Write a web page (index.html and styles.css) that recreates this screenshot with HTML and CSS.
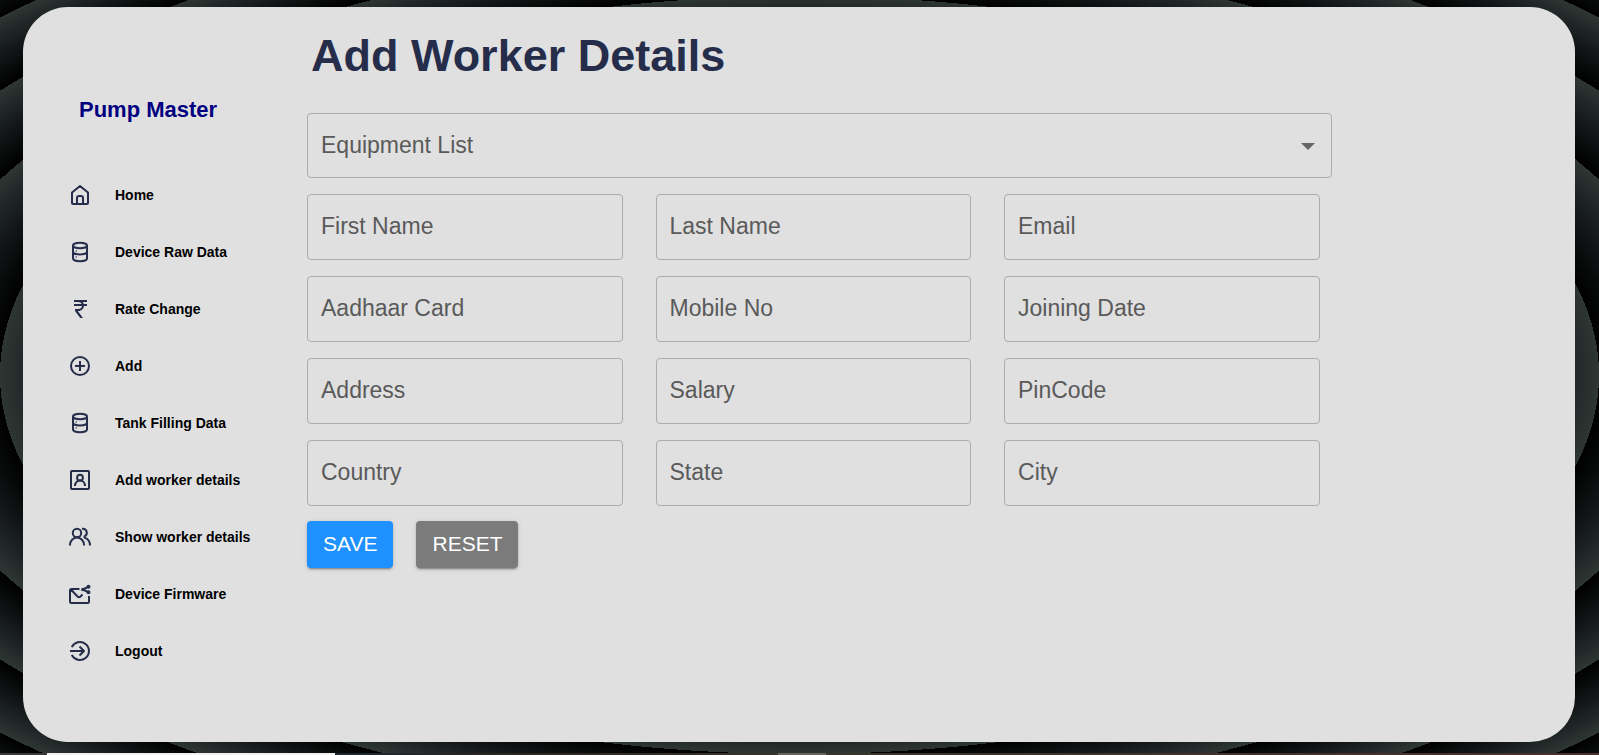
FILE: index.html
```html
<!DOCTYPE html>
<html lang="en">
<head>
<meta charset="utf-8">
<title>Pump Master - Add Worker Details</title>
<link rel="stylesheet" href="styles.css">
</head>
<body>
<div class="card">
  <aside class="sidebar">
    <h2 class="brand">Pump Master</h2>
    <nav>
      <ul class="menu">
        <li><a class="menu-link" href="#">
          <svg class="icon" viewBox="0 0 24 24"><path d="M5 21H19Q20 21 20 20V9.500L12 3L4 9.500V20Q4 21 5 21ZM9 21V15a2 2 0 0 1 2-2h2a2 2 0 0 1 2 2v6"/></svg>
          Home</a></li>
        <li><a class="menu-link" href="#">
          <svg class="icon" viewBox="0 0 24 24"><ellipse cx="12" cy="5.500" rx="7" ry="2.700"/><path d="M5 5.500v13c0 1.500 3 2.700 7 2.700s7-1.200 7-2.700v-13M5 11.700c0 1.500 3 2.700 7 2.700s7-1.200 7-2.700"/><path class="thin" d="M7.500 11h1.500M7.500 17h1.500"/></svg>
          Device Raw Data</a></li>
        <li><a class="menu-link" href="#">
          <svg class="icon icon-solid" viewBox="0 0 24 24"><path d="M13.660 7c-.56-1.180-1.760-2-3.160-2H6V3h13v2h-4.260c.48.580.840 1.260 1.050 2H19v2h-3.020c-.25 2.800-2.610 5-5.480 5h-.73l5.230 7h-2.770L7 14v-2h3.500c1.760 0 3.220-1.300 3.460-3H6V7z"/></svg>
          Rate Change</a></li>
        <li><a class="menu-link" href="#">
          <svg class="icon" viewBox="0 0 24 24"><circle cx="12" cy="12" r="9"/><path d="M12 7v10M7 12h10"/></svg>
          Add</a></li>
        <li><a class="menu-link" href="#">
          <svg class="icon" viewBox="0 0 24 24"><ellipse cx="12" cy="5.500" rx="7" ry="2.700"/><path d="M5 5.500v13c0 1.500 3 2.700 7 2.700s7-1.200 7-2.700v-13M5 11.700c0 1.500 3 2.700 7 2.700s7-1.200 7-2.700"/><path class="thin" d="M7.500 11h1.500M7.500 17h1.500"/></svg>
          Tank Filling Data</a></li>
        <li><a class="menu-link" href="#">
          <svg class="icon" viewBox="0 0 24 24"><rect x="3" y="3" width="18" height="18" rx="1"/><circle cx="12" cy="9.700" r="2.900"/><path d="M7 18c0-3.200 2-5.400 5-5.400s5 2.200 5 5.400"/></svg>
          Add worker details</a></li>
        <li><a class="menu-link" href="#">
          <svg class="icon" viewBox="0 0 24 24"><circle cx="9" cy="8" r="4.200"/><path d="M2 20.500V20a7 7.500 0 0 1 14 0v.5M14 3.800h.5a4 4 0 0 1 2 7.600v1.200c3.500 1.200 5.500 3.900 5.500 7.900"/></svg>
          Show worker details</a></li>
        <li><a class="menu-link" href="#">
          <svg class="icon" viewBox="0 0 24 24"><path d="M11.500 7H3.500Q2 7 2 8.500V19.500Q2 21 3.500 21H19.500Q21 21 21 19.500V14M3 7.500L9.500 14.500Q11 16 12.500 14.500L14.500 12.500"/><path d="M20.500 4.700L15 7.500L20.500 10.300"/><circle class="dot" cx="20.500" cy="4.700" r="1"/><circle class="dot" cx="20.500" cy="10.300" r="1"/><circle class="dot" cx="14.800" cy="7.500" r=".7"/></svg>
          Device Firmware</a></li>
        <li><a class="menu-link" href="#">
          <svg class="icon" viewBox="0 0 24 24"><path d="M3.800 8.200a9 9 0 1 1 0 7.600M2 12h13.500M11.500 7.500L16 12l-4.500 4.500"/></svg>
          Logout</a></li>
      </ul>
    </nav>
  </aside>
  <main class="content">
    <h1 class="title">Add Worker Details</h1>
    <form class="form">
      <div class="select-wrap">
        <select class="field field-select" aria-label="Equipment List">
          <option>Equipment List</option>
        </select>
        <svg class="caret" viewBox="0 0 14 7"><path d="M0 0h14L7 7z"/></svg>
      </div>
      <div class="grid">
        <input class="field" type="text" placeholder="First Name" aria-label="First Name">
        <input class="field" type="text" placeholder="Last Name" aria-label="Last Name">
        <input class="field" type="text" placeholder="Email" aria-label="Email">
        <input class="field" type="text" placeholder="Aadhaar Card" aria-label="Aadhaar Card">
        <input class="field" type="text" placeholder="Mobile No" aria-label="Mobile No">
        <input class="field" type="text" placeholder="Joining Date" aria-label="Joining Date">
        <input class="field" type="text" placeholder="Address" aria-label="Address">
        <input class="field" type="text" placeholder="Salary" aria-label="Salary">
        <input class="field" type="text" placeholder="PinCode" aria-label="PinCode">
        <input class="field" type="text" placeholder="Country" aria-label="Country">
        <input class="field" type="text" placeholder="State" aria-label="State">
        <input class="field" type="text" placeholder="City" aria-label="City">
      </div>
      <div class="actions">
        <button class="btn btn-save" type="button">SAVE</button>
        <button class="btn btn-reset" type="reset">RESET</button>
      </div>
    </form>
  </main>
</div>
<div class="bottom-strip"></div>
</body>
</html>
```

FILE: styles.css
```css
* {
  box-sizing: border-box;
}

body {
  margin: 0;
  min-height: 100vh;
  display: flex;
  flex-direction: column;
  font-family: "Liberation Sans", Arial, sans-serif;
  background: repeating-radial-gradient(50% 379px at 50% 375px, #000 0%, #141819 6%, #2e3634 12.5%);
}

.card {
  flex: 1;
  display: flex;
  margin: 7px 24px 11px 23px;
  border-radius: 45px;
  background: #e0e0e0;
}

.sidebar {
  flex: 0 0 284px;
  padding: 90px 0 0 44px;
}

.brand {
  margin: 0 0 43px 12px;
  font-size: 22px;
  line-height: 26px;
  color: #000080;
}

.menu {
  margin: 0;
  padding: 0;
  list-style: none;
}

.menu-link {
  display: flex;
  align-items: center;
  gap: 23px;
  height: 57px;
  padding-left: 1px;
  font-size: 14px;
  font-weight: bold;
  color: #000;
  text-decoration: none;
}

.icon {
  width: 24px;
  height: 24px;
  fill: none;
  stroke: #252d4a;
  stroke-width: 2;
  stroke-linejoin: round;
}

.icon .thin {
  stroke-width: 1;
}

.icon .dot,
.icon-solid {
  fill: #252d4a;
}

.icon-solid {
  stroke: none;
}

.content {
  flex: 1;
  padding-top: 23px;
}

.title {
  margin: 0 0 31px 4px;
  font-size: 45px;
  line-height: 52px;
  color: #252d4a;
}

.form {
  width: 80.8%;
}

.select-wrap {
  position: relative;
  display: flex;
}

.field {
  width: 100%;
  min-width: 0;
  height: 66px;
  padding: 18px 13px 20px;
  border: 1px solid #acacac;
  border-radius: 4px;
  background: transparent;
  font-family: inherit;
  font-size: 23px;
  line-height: 26px;
  color: #5a5a5a;
}

.field::placeholder {
  color: #5a5a5a;
  opacity: 1;
}

.field-select {
  height: 65px;
  padding-bottom: 19px;
  appearance: none;
}

.caret {
  position: absolute;
  top: 30px;
  right: 17px;
  width: 14px;
  height: 7px;
  fill: #666;
  pointer-events: none;
}

.grid {
  display: grid;
  grid-template-columns: repeat(3, 1fr);
  gap: 16px 33px;
  margin: 16px 12px 15px 0;
}

.actions {
  display: flex;
  gap: 23px;
}

.btn {
  height: 47px;
  padding: 0 16px 2px;
  border: 0;
  border-radius: 4px;
  font-family: inherit;
  font-size: 21px;
  color: #fff;
  box-shadow: 0 3px 1px -2px rgba(0, 0, 0, 0.2), 0 2px 2px rgba(0, 0, 0, 0.14), 0 1px 5px rgba(0, 0, 0, 0.12);
}

.btn-save {
  background: #1e90ff;
}

.btn-reset {
  background: #7b7b7b;
}

.bottom-strip {
  height: 2px;
  background: linear-gradient(90deg, #3a3a3a 47px, #f0f0f0 47px, #f0f0f0 335px, #1c2830 335px, #2a2422 500px, #3a3228 778px, #6a6258 778px, #6a6258 826px, #3a3228 826px, #4a302a 100%);
}
```
